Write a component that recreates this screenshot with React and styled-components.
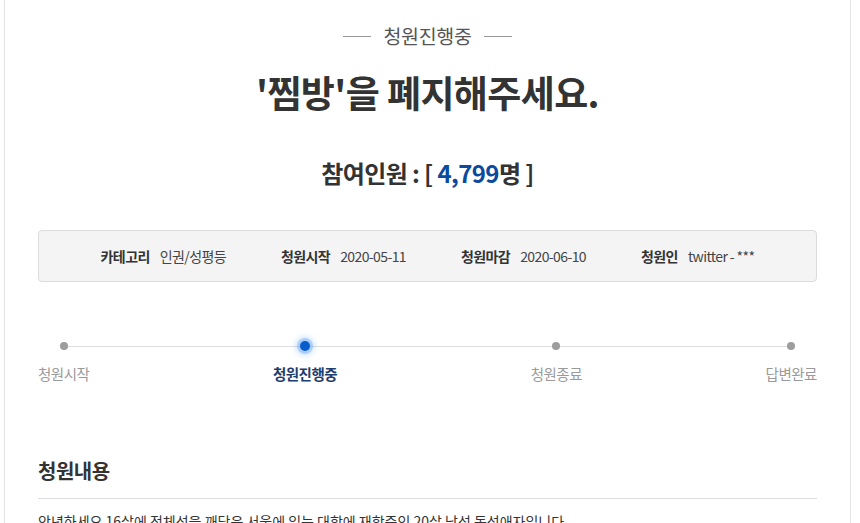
import React from "react";
import styled, { createGlobalStyle } from "styled-components";

const Global = createGlobalStyle`
  html, body { margin: 0; padding: 0; background: #fff; }
  body { font-family: "Noto Sans CJK KR", "Noto Sans", sans-serif; color: #333; }
  * { box-sizing: border-box; }
`;

const Card = styled.div`
  margin-left: 4px;
  width: 847px;
  min-height: 523px;
  border-left: 1px solid #e4e4e4;
  border-right: 1px solid #e4e4e4;
  padding: 22px 33px 0 33px;
  overflow: hidden;
`;

const Status = styled.div`
  display: flex;
  align-items: center;
  justify-content: center;
  gap: 12px;
  font-size: 19.5px;
  line-height: 28px;
  color: #555;
  letter-spacing: -0.3px;
  &::before, &::after {
    content: "";
    width: 28px;
    height: 1px;
    background: #999;
  }
`;

const Title = styled.h1`
  margin: 19px 0 0;
  text-align: center;
  font-size: 37px;
  line-height: 46px;
  font-weight: 700;
  color: #333;
  letter-spacing: -0.6px;
`;

const Count = styled.div`
  margin-top: 42px;
  text-align: center;
  font-size: 24px;
  line-height: 32px;
  font-weight: 700;
  color: #333;
  letter-spacing: -0.6px;
`;

const Num = styled.span`
  color: #0b4a9e;
`;

const InfoBox = styled.ul`
  margin: 41px 0 0;
  padding: 0;
  list-style: none;
  height: 52px;
  background: #f4f4f4;
  border: 1px solid #dcdcdc;
  border-radius: 4px;
  display: flex;
  align-items: center;
  justify-content: center;
  gap: 55px;
  font-size: 14px;
  letter-spacing: -0.6px;
`;

const InfoItem = styled.li`
  display: flex;
  gap: 10px;
  color: #444;
`;

const InfoLabel = styled.strong`
  font-weight: 700;
  color: #333;
`;

const Timeline = styled.div`
  position: relative;
  margin-top: 58px;
  display: flex;
  justify-content: space-between;
  &::before {
    content: "";
    position: absolute;
    top: 6px;
    left: 25px;
    right: 26px;
    height: 1px;
    background: #dedede;
  }
`;

const Step = styled.div`
  position: relative;
  display: flex;
  flex-direction: column;
  align-items: center;
  gap: 12px;
  margin-right: ${(p) => (p.$shift ? `${p.$shift}px` : "0")};
`;

const Dot = styled.span`
  display: flex;
  align-items: center;
  justify-content: center;
  height: 12px;
  &::before {
    content: "";
    width: ${(p) => (p.$active ? "10px" : "8px")};
    height: ${(p) => (p.$active ? "10px" : "8px")};
    border-radius: 50%;
    background: ${(p) => (p.$active ? "#0a5ccc" : "#9d9d9d")};
    box-shadow: ${(p) =>
      p.$active ? "0 0 0 3px rgba(90,160,240,0.35), 0 0 6px 4px rgba(90,160,240,0.35)" : "none"};
  }
`;

const StepLabel = styled.span`
  font-size: 14.5px;
  line-height: 20px;
  letter-spacing: -0.5px;
  color: ${(p) => (p.$active ? "#1d3d6e" : "#9a9a9a")};
  font-weight: ${(p) => (p.$active ? 700 : 400)};
`;

const Heading = styled.h2`
  margin: 73px 0 0;
  padding-bottom: 13px;
  border-bottom: 1px solid #ddd;
  font-size: 20px;
  line-height: 28px;
  font-weight: 700;
  color: #333;
  letter-spacing: -0.5px;
`;

const Body = styled.p`
  margin: 10px 0 0;
  font-size: 14px;
  line-height: 24px;
  color: #333;
  letter-spacing: 0;
`;

const steps = [
  { label: "청원시작" },
  { label: "청원진행중", active: true, shift: 10 },
  { label: "청원종료" },
  { label: "답변완료" },
];

export default function App() {
  return (
    <>
      <Global />
      <Card>
        <Status>청원진행중</Status>
        <Title>'찜방'을 폐지해주세요.</Title>
        <Count>
          참여인원 : [ <Num>4,799</Num>명 ]
        </Count>
        <InfoBox>
          <InfoItem>
            <InfoLabel>카테고리</InfoLabel>인권/성평등
          </InfoItem>
          <InfoItem>
            <InfoLabel>청원시작</InfoLabel>2020-05-11
          </InfoItem>
          <InfoItem>
            <InfoLabel>청원마감</InfoLabel>2020-06-10
          </InfoItem>
          <InfoItem>
            <InfoLabel>청원인</InfoLabel>twitter - ***
          </InfoItem>
        </InfoBox>
        <Timeline>
          {steps.map((s) => (
            <Step key={s.label} $shift={s.shift}>
              <Dot $active={s.active} />
              <StepLabel $active={s.active}>{s.label}</StepLabel>
            </Step>
          ))}
        </Timeline>
        <Heading>청원내용</Heading>
        <Body>
          안녕하세요 16살에 정체성을 깨닫은 서울에 있는 대학에 재학중인 20살 남성 동성애자입니다.
        </Body>
      </Card>
    </>
  );
}
